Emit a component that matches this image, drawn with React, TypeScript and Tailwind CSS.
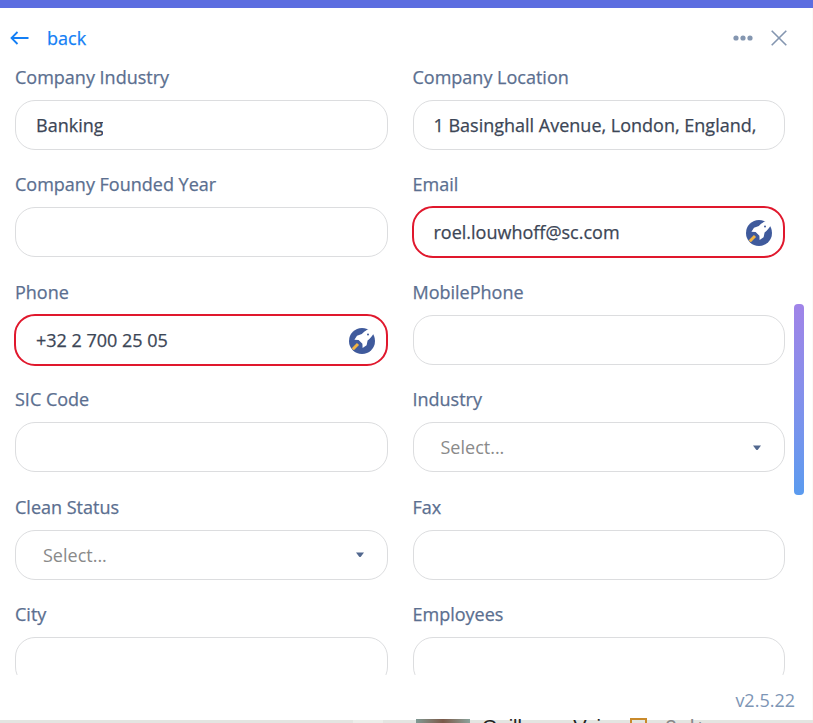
import React from "react";

function Rocket() {
  return (
    <svg width="27" height="27" viewBox="0 0 27 27" className="shrink-0">
      <circle cx="13" cy="14" r="13" fill="#3f5a9c" />
      <path d="M3.8 22.2 L9 17" fill="none" stroke="#f2b544" strokeWidth="3" />
      <path d="M26.3 0.6 C20 1.4 15.6 3.8 12.8 7 L8 8.8 L5.4 12.8 L9.6 13 L13.4 16.8 L13.6 21 L17.6 18.2 L18.6 13.6 C23 10 25.8 6 26.3 0.6 Z" fill="#ffffff" />
      <circle cx="19" cy="7.6" r="1" fill="#3f5a9c" />
    </svg>
  );
}

function Caret() {
  return (
    <svg width="8" height="6" viewBox="0 0 8 6" className="shrink-0">
      <path d="M0 0.5 H8 L5 4.6 Q4 5.6 3 4.6 Z" fill="#52688f" />
    </svg>
  );
}

type FieldProps = {
  label: string;
  value?: string;
  select?: boolean;
  flagged?: boolean;
};

function Field({ label, value, select, flagged }: FieldProps) {
  return (
    <div className="flex flex-col">
      <div className="h-[22px] whitespace-nowrap text-[18px] leading-[21.8px] font-medium text-[#5b6f90] [-webkit-text-stroke:0.25px]">{label}</div>
      <div
        className={
          flagged
            ? "-ml-px mt-[10px] -mb-px flex h-[52px] items-center justify-between rounded-[21px] border-2 border-[#e0182d] bg-white pl-[20px] pr-[10px] pt-[1px] text-[18px] font-medium text-[#3c4656] [-webkit-text-stroke:0.25px]"
            : select
              ? "mt-[11px] flex h-[50px] items-center justify-between rounded-[20px] border border-[#dcdddf] bg-white pl-[20px] pr-[23px] pt-[1px] text-[18px] text-[#3c4656]"
              : "mt-[11px] flex h-[50px] items-center justify-between rounded-[20px] border border-[#dcdddf] bg-white pl-[20px] pr-[26px] pt-[1px] text-[18px] font-medium text-[#3c4656] [-webkit-text-stroke:0.25px]"
        }
      >
        {select ? (
          <>
            <span className="pl-[7px] text-[#8a8a8a]">Select...</span>
            <Caret />
          </>
        ) : (
          <span className="overflow-hidden whitespace-nowrap">{value}</span>
        )}
        {flagged && <Rocket />}
      </div>
    </div>
  );
}

export default function App() {
  return (
    <div className="relative flex h-[723px] w-[813px] flex-col overflow-hidden bg-white font-['Open_Sans',sans-serif]">
      <div className="h-[8px] shrink-0 bg-[#5c6de0]" />
      <div className="flex min-h-0 flex-1 border-r border-[#fbfbf6]">
        <div className="relative flex min-w-0 flex-1 flex-col">
          <header className="flex h-[58px] shrink-0 items-center pl-[10px] pr-[25px] pt-[2px]">
            <svg width="19" height="14" viewBox="0 0 19 14" className="text-[#147ff5]">
              <path d="M18.5 7 H1.5 M7.5 1 L1.5 7 L7.5 13" fill="none" stroke="currentColor" strokeWidth="1.8" />
            </svg>
            <span className="ml-[18px] text-[18px] font-medium text-[#147ff5] [-webkit-text-stroke:0.25px]">back</span>
            <div className="ml-auto flex items-center gap-[18px]">
              <svg width="20" height="6" viewBox="0 0 20 6" className="text-[#8496b0]">
                <circle cx="3" cy="3" r="2.6" fill="currentColor" />
                <circle cx="10" cy="3" r="2.6" fill="currentColor" />
                <circle cx="17" cy="3" r="2.6" fill="currentColor" />
              </svg>
              <svg width="16" height="16" viewBox="0 0 16 16" className="text-[#8496b0]">
                <path d="M0.7 0.7 L15.3 15.3 M15.3 0.7 L0.7 15.3" fill="none" stroke="currentColor" strokeWidth="1.6" />
              </svg>
            </div>
          </header>
          <div className="min-h-0 flex-1 overflow-hidden pl-[15px] pr-[26px] pt-[0.6px]">
            <div className="grid grid-cols-[372.5px_372.5px] gap-x-[25px] gap-y-[24.5px]">
              <Field label="Company Industry" value="Banking" />
              <Field label="Company Location" value="1 Basinghall Avenue, London, England," />
              <Field label="Company Founded Year" />
              <Field label="Email" value="roel.louwhoff@sc.com" flagged />
              <Field label="Phone" value="+32 2 700 25 05" flagged />
              <Field label="MobilePhone" />
              <Field label="SIC Code" />
              <Field label="Industry" select />
              <Field label="Clean Status" select />
              <Field label="Fax" />
              <Field label="City" />
              <Field label="Employees" />
            </div>
          </div>
          <div className="flex h-[45px] shrink-0 items-center justify-end pr-[17px] pt-[5px] text-[18px] text-[#7d95b5]">
            v2.5.22
          </div>
          <div className="absolute left-[794px] top-[296px] h-[191px] w-[10px] rounded-[4px] bg-gradient-to-b from-[#a084e8] to-[#5a9bef]" />
        </div>
      </div>
      <div className="relative h-[3px] shrink-0 bg-[#e3e5e1]">
        <div className="absolute left-[353px] top-0 h-[3px] w-[30px] bg-[#eceeea]" />
        <div className="absolute left-[416px] top-[-1px] h-[4px] w-[54px] bg-gradient-to-r from-[#7f9a94] via-[#7a5a4a] to-[#8aa39c]" />
        <div className="absolute left-[482px] top-[-4px] flex items-start whitespace-nowrap font-['Liberation_Sans',sans-serif] text-[20px] leading-[22px] text-[#222222]">
          <span>Guillermo Veiga</span>
          <span className="ml-[7px] mt-[2px] h-[8px] w-[17px] border-2 border-[#c98a2b]" />
          <span className="ml-[6px] text-[#888888]">· 3rd+</span>
        </div>
      </div>
    </div>
  );
}
